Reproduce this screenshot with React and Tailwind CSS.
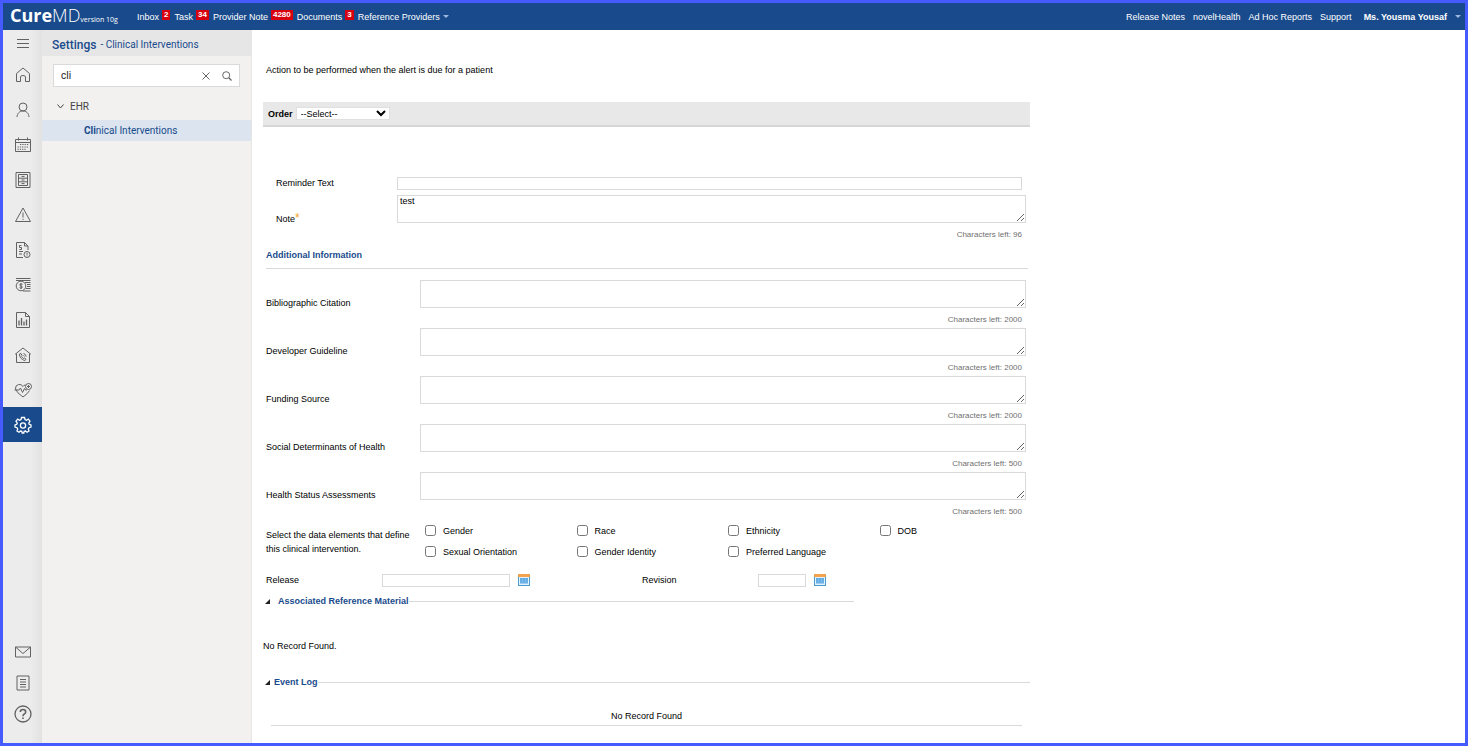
import { useState } from 'react';

const NAV_ITEMS = [
  { label: 'Inbox', count: 2 },
  { label: 'Task', count: 34 },
  { label: 'Provider Note', count: 4280 },
  { label: 'Documents', count: 3 },
];

const USER_LINKS = ['Release Notes', 'novelHealth', 'Ad Hoc Reports', 'Support'];

const DETAIL_FIELDS = [
  { id: 'citation', label: 'Bibliographic Citation', left: 2000 },
  { id: 'guideline', label: 'Developer Guideline', left: 2000 },
  { id: 'funding', label: 'Funding Source', left: 2000 },
  { id: 'social', label: 'Social Determinants of Health', left: 500 },
  { id: 'status', label: 'Health Status Assessments', left: 500 },
];

const DATA_ELEMENTS = [
  'Gender', 'Race', 'Ethnicity', 'DOB',
  'Sexual Orientation', 'Gender Identity', 'Preferred Language',
];

const ICONS = {
  home: <path d="M2.500 7.500 9 2l6.500 5.500V15.500H11.500V11Q11.500 9.500 9 9.500T6.500 11V15.500H2.500Z" />,
  user: <><circle cx="9" cy="6" r="4" /><path d="M3 16C3.300 12.300 5.500 10 9 10S14.700 12.300 15 16" /></>,
  calendar: (
    <>
      <path d="M1.500 3.500H16.500V15.500H1.500ZM1.500 6.500H16.500M4.500 1.500V4.500M13.500 1.500V4.500" />
      <path d="M6 8.500H15M3.500 11H15M3.500 13.300H12" strokeDasharray="1.300 1" />
    </>
  ),
  cabinet: <><path d="M2 1.500H16V16.500H2Z" /><path d="M4.500 3.500H13.500V14.500H4.500ZM4.500 7.200H13.500M4.500 10.800H13.500M7.500 5.400H10.500M7.500 9H10.500M7.500 12.600H10.500" /></>,
  alert: <><path d="M9 2 16.500 15.500H1.500Z" /><path d="M9 6.500V11.500M9 12.800V14" /></>,
  bill: (
    <>
      <path d="M9 16.500H2.500V1.500H10.500L14 5V9M10.500 1.500V5H14" />
      <path d="M7.500 4.500H5.500V6.500H7.500V8.500H5.500M5 10.500H9M5 13H8" />
      <circle cx="13" cy="13.500" r="3" /><path d="M13 11.800V13.800M13 14.500V15.300" />
    </>
  ),
  money: (
    <>
      <path d="M2 2.500H16.500M2 4.500H16.500M11 6.500H16.500M13 8.500H16.500M13 10.500H16.500M12 12.500H16.500M9 15H16.500" strokeWidth="1.200" />
      <circle cx="7" cy="10" r="4.800" />
      <path d="M8.500 8.300Q7 7.300 6 8.300T7 10T8 11.800T5.500 11.600M7 7V13" />
    </>
  ),
  chart: <><path d="M2.500 1.500H11.500L15.500 5.500V16.500H2.500ZM11.500 1.500V5.500H15.500" /><path d="M5 14.500V9.500M7.500 14.500V7M10 14.500V10.500M12.500 14.500V8.500" strokeWidth="1.300" /></>,
  homeCall: (
    <>
      <path d="M1.500 8 9 2 16.500 8H15.500V16.500H2.500V8Z" />
      <path d="M5.500 8 7 7.500 8 9.500 7.300 10.500 9.300 12.500 10.500 12 12 13.200 11 14.500C7.800 14 5.300 11 5.500 8ZM9.500 7.500Q11.800 8 12.200 10.500M9.500 9.500Q10.300 9.700 10.400 10.500" />
    </>
  ),
  heart: (
    <>
      <path d="M11.500 4Q9.700 4 9 5.500Q7.500 3 4.500 3.500Q1 4.500 1.500 8Q2.500 11.500 9 16Q14 12.500 15.500 9.500" />
      <path d="M.5 9H5L6.500 7 8.500 11.500 10.500 7.500 11.500 9H13" />
      <circle cx="14.500" cy="5.500" r="3" /><path d="M14.500 4V7M13 5.500H16" />
    </>
  ),
  gear: (
    <>
      <path d="M7.500 1.500H10.500L11 3.500 12.500 4.200 14.300 3.200 16 5.200 14.800 7 15.200 8.300 17 9V11L15 11.700 14.300 13 15 15 13 16.300 11.500 15 10.200 15.300 9.800 17H8.200L7.800 15.300 6.500 15 5 16.300 3 15 3.700 13 3 11.700 1 11V9L2.800 8.300 3.200 7 2 5.200 3.700 3.200 5.500 4.200 7 3.500Z" strokeWidth="1.300" />
      <circle cx="9" cy="9.500" r="2.600" strokeWidth="1.300" />
    </>
  ),
  mail: <path d="M1.500 4H16.500V14H1.500ZM1.500 4 9 10.500 16.500 4" />,
  notes: <path d="M3 2H15V16H3ZM6 5.500H12M6 8H12M6 10.500H12M6 13H12" />,
  help: (
    <>
      <circle cx="9" cy="9" r="8" strokeWidth="1.300" />
      <path d="M6.300 7Q6.300 4.500 9 4.500T11.700 7Q11.700 8.300 10.300 9T9 11.300M9 12.500V14" strokeWidth="1.600" />
    </>
  ),
};

const RAIL_TOP = ['home', 'user', 'calendar', 'cabinet', 'alert', 'bill', 'money', 'chart', 'homeCall', 'heart', 'gear'];
const RAIL_BOTTOM = ['mail', 'notes', 'help'];

function RailIcon({ name }) {
  return (
    <svg viewBox="0 0 18 18" className="size-[18px]" fill="none" stroke="currentColor" strokeWidth="1">
      {ICONS[name]}
    </svg>
  );
}

function Caret() {
  return <span className="border-x-[3px] border-t-[3px] border-x-transparent border-t-[#9db8dc]" />;
}

export default function App() {
  return (
    <div className="flex min-h-screen flex-col border-[3px] border-[#465bff] bg-white font-['Liberation_Sans',Arial,sans-serif] text-[9px] leading-[14px] text-black">
      <Header />
      <div className="flex flex-1">
        <Rail />
        <SettingsPanel />
        <main className="min-w-0 flex-1 px-[11px]">
          <InterventionForm />
        </main>
      </div>
    </div>
  );
}

function Header() {
  return (
    <header className="flex h-[27px] items-center justify-between bg-[#194b8c] pr-1 pl-[7px] text-white">
      <div className="flex items-center">
        <a href="#" className="flex w-[127px] items-baseline pt-0.5 font-['Open_Sans',sans-serif] leading-[25px]">
          <span className="text-[18px] font-bold">Cure</span>
          <span className="text-[18px] font-light">MD</span>
          <span className="text-[7px]">version 10g</span>
        </a>
        <nav className="flex items-center gap-1">
          {NAV_ITEMS.map(item => (
            <a key={item.label} href="#" className="flex gap-[3px]">
              {item.label}
              <span className="h-[10px] bg-[#d8000f] px-0.5 text-[8px] leading-[10px] font-bold">{item.count}</span>
            </a>
          ))}
          <a href="#" className="flex items-center gap-[3px]">Reference Providers <Caret /></a>
        </nav>
      </div>
      <nav className="flex items-center gap-2">
        {USER_LINKS.map(link => <a key={link} href="#">{link}</a>)}
        <button className="ml-1 flex items-center gap-2 font-bold">Ms. Yousma Yousaf <Caret /></button>
      </nav>
    </header>
  );
}

function Rail() {
  return (
    <aside className="flex w-[39px] shrink-0 flex-col bg-linear-to-r from-[#ececec] from-70% to-[#e2e2e2] pb-[14px] text-[#626262]">
      <button aria-label="Menu" className="flex h-[27px] items-center justify-center">
        <svg viewBox="0 0 12 9" className="h-[9px] w-3" stroke="currentColor"><path d="M0 .5H12M0 4.500H12M0 8.500H12" /></svg>
      </button>
      {RAIL_TOP.map(name => (
        <button key={name} aria-label={name}
          className={`flex h-[35px] items-center justify-center ${name === 'gear' ? 'bg-[#194b8c] text-white' : ''}`}>
          <RailIcon name={name} />
        </button>
      ))}
      <div className="mt-auto flex flex-col">
        {RAIL_BOTTOM.map(name => (
          <button key={name} aria-label={name} className="flex h-[31px] items-center justify-center">
            <RailIcon name={name} />
          </button>
        ))}
      </div>
    </aside>
  );
}

function SettingsPanel() {
  const [query, setQuery] = useState('cli');

  return (
    <aside className="w-[210px] shrink-0 border-r border-[#e6e6e6] bg-[#f2f1f0] font-[Roboto,sans-serif] text-[10px]">
      <h1 className="flex h-[26px] items-center gap-1 bg-[#e6e6e6] px-[10px] pt-1 text-[#194b8c]">
        <span className="text-[12px] font-medium">Settings</span>
        <span>- Clinical Interventions</span>
      </h1>
      <div className="mx-[11px] mt-2 flex h-[23px] items-center gap-3 border border-[#dadada] bg-white px-[7px] text-[#666]">
        <input aria-label="Search settings" value={query} onChange={e => setQuery(e.target.value)}
          className="min-w-0 flex-1 text-[#222] outline-none" />
        <button aria-label="Clear" onClick={() => setQuery('')}>
          <svg viewBox="0 0 8 8" className="size-2" stroke="currentColor"><path d="M.5.5 7.500 7.500M7.500.5.5 7.500" /></svg>
        </button>
        <button aria-label="Search">
          <svg viewBox="0 0 10 10" className="size-[10px]" fill="none" stroke="currentColor"><circle cx="4.200" cy="4.200" r="3.500" /><path d="M6.800 6.800 9.500 9.500" strokeWidth="1.300" /></svg>
        </button>
      </div>
      <button className="mt-3 flex h-[15px] items-center gap-1.5 px-[15px] text-[#444]">
        <svg viewBox="0 0 7 5" className="h-[5px] w-[7px]" fill="none" stroke="currentColor"><path d="M.5.5 3.500 4 6.500.5" /></svg>
        EHR
      </button>
      <a href="#" className="mt-1.5 block h-[21px] bg-[#dce5ef] pl-[42px] leading-[21px] text-[#194b8c]"><b>Cli</b>nical Interventions</a>
    </aside>
  );
}

function InterventionForm() {
  return (
    <form className="w-full max-w-[767px]">
      <p className="pt-[33px] pl-[3px]">Action to be performed when the alert is due for a patient</p>
      <div className="mt-[25px] flex h-[25px] items-center gap-[3px] border-b-2 border-[#d6d6d6] bg-[#e8e8e8] px-[5px]">
        <label htmlFor="order" className="font-bold">Order</label>
        <select id="order" className="h-[13px] w-[94px] border border-[#e0e0e0] bg-white leading-[11px]">
          <option>--Select--</option>
        </select>
      </div>

      <div className="mt-[49px] flex items-center pr-2 pl-[13px]">
        <label htmlFor="reminder" className="w-[121px] shrink-0">Reminder Text</label>
        <input id="reminder" className="h-[13px] min-w-0 flex-1 border border-[#d9d9d9] px-0.5" />
      </div>
      <div className="mt-[5px] flex pr-1 pl-[13px]">
        <label htmlFor="note" className="w-[121px] shrink-0 pt-4">Note<span className="text-[12px] text-[#f5a623]">*</span></label>
        <CountedArea id="note" left={96} value="test" />
      </div>

      <h2 className="mr-0.5 ml-[3px] border-b border-[#d9d9d9] py-1.5 font-bold text-[#194b8c]">Additional Information</h2>
      <div className="mt-[11px] flex flex-col">
        {DETAIL_FIELDS.map(field => (
          <div key={field.id} className="flex h-12 pr-1 pl-[3px]">
            <label htmlFor={field.id} className="w-[154px] shrink-0 pt-4">{field.label}</label>
            <CountedArea id={field.id} left={field.left} />
          </div>
        ))}
      </div>

      <fieldset aria-labelledby="elements-label" className="flex items-start pr-1 pl-[3px]">
        <div id="elements-label" className="w-[154px] shrink-0 pt-2">Select the data elements that define this clinical intervention.</div>
        <div className="grid flex-1 grid-cols-4">
          {DATA_ELEMENTS.map(name => (
            <label key={name} className="flex h-[21px] items-center gap-[7px] pl-[5px]">
              <input type="checkbox" className="size-[11px]" />
              {name}
            </label>
          ))}
        </div>
      </fieldset>

      <div className="mt-[11px] flex items-center pl-[3px]">
        <DateField id="release" label="Release" inputClass="w-32" />
        <div className="w-[112px]" />
        <DateField id="revision" label="Revision" inputClass="w-12" />
      </div>

      <div className="mt-[7px] w-[591px] max-w-full">
        <FoldTitle gap="gap-2">Associated Reference Material</FoldTitle>
      </div>
      <p className="mt-[31px]">No Record Found.</p>
      <div className="mt-[22px]">
        <FoldTitle gap="gap-1">Event Log</FoldTitle>
      </div>
      <p className="mx-2 mt-5 border-b border-[#d9d9d9] pb-[2px] text-center">No Record Found</p>
    </form>
  );
}

function CountedArea({ id, left, value }) {
  return (
    <div className="flex min-w-0 flex-1 flex-col">
      <textarea id={id} defaultValue={value} className="h-7 w-full resize border border-[#d9d9d9] px-0.5 leading-[11px]" />
      <span className="pt-[5px] pr-1 text-right text-[8px] text-[#707070]">Characters left: {left}</span>
    </div>
  );
}

function DateField({ id, label, inputClass }) {
  return (
    <div className="flex items-center">
      <label htmlFor={id} className="w-[116px]">{label}</label>
      <input id={id} className={`h-[13px] border border-[#d9d9d9] px-0.5 ${inputClass}`} />
      <button type="button" aria-label={`Pick ${label} date`} className="ml-2">
        <svg viewBox="0 0 12 12" className="size-3">
          <path d="M0 0H12V12H0Z" fill="#4a9bd0" />
          <path d="M0 0H12V3H0Z" fill="#f3a34c" />
          <path d="M1 3H11V11H1Z" fill="#e4f2fb" />
          <path d="M2 4H10V9.500H2Z" fill="#5aa6e0" />
          <path d="M2 6H10M2 8H10M4.500 4V9.500M7.500 4V9.500" stroke="#8cc4ee" strokeWidth=".5" />
        </svg>
      </button>
    </div>
  );
}

function FoldTitle({ gap, children }) {
  return (
    <h2 className="flex items-center pl-0.5 font-bold text-[#194b8c]">
      <button type="button" className={`flex items-center ${gap}`}>
        <svg viewBox="0 0 5 5" className="size-[5px]"><path d="M5 0V5H0Z" fill="#222" /></svg>
        {children}
      </button>
      <span className="h-px flex-1 bg-[#d9d9d9]" />
    </h2>
  );
}
